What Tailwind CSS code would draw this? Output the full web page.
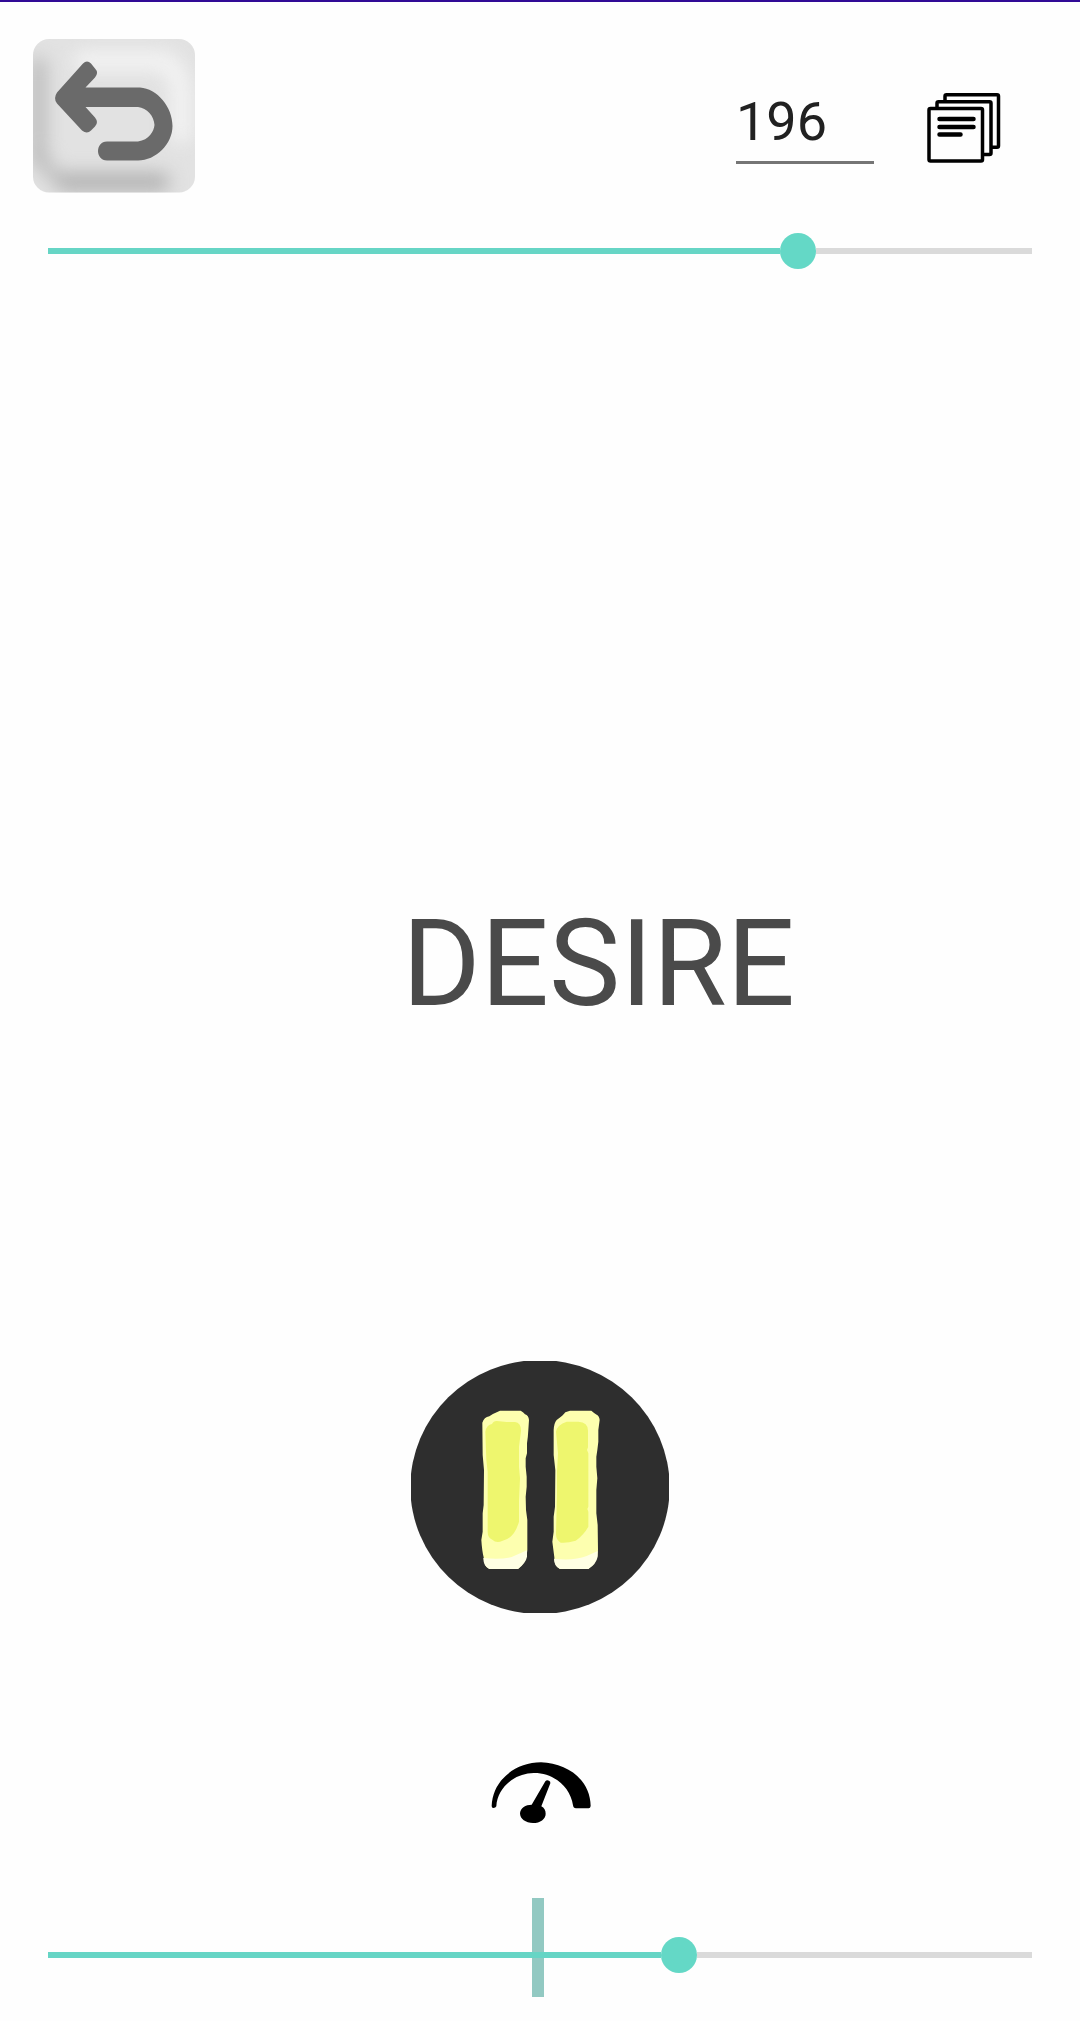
<!DOCTYPE html>
<html lang="en">
<head>
    <meta charset="UTF-8">
    <meta name="viewport" content="width=device-width, initial-scale=1.0">
    <title>Reader</title>
    <script src="https://cdn.jsdelivr.net/npm/@tailwindcss/browser@4"></script>
</head>
<body class="bg-[#fefefe] font-['Roboto',sans-serif]">
    <div class="flex flex-col w-[1080px] h-[2021px] overflow-hidden">
        <div class="h-0.5 shrink-0 bg-[#310a96]"></div>

        <!-- Header -->
        <header class="flex items-start h-[213px] shrink-0 pl-[33px] pt-[37px]">
            <button class="block w-[162px] h-[154px]" aria-label="Back">
                <svg class="block" width="162" height="154" viewBox="0 0 162 154">
                    <defs>
                        <clipPath id="key"><rect width="162" height="153.5" rx="16"/></clipPath>
                        <filter id="soft" filterUnits="userSpaceOnUse" x="-60" y="-60" width="280" height="280" color-interpolation-filters="sRGB"><feGaussianBlur stdDeviation="9"/></filter>
                    </defs>
                    <g clip-path="url(#key)">
                        <rect width="162" height="154" fill="#e2e2e2"/>
                        <g filter="url(#soft)" fill="none" stroke-linecap="round">
                            <path d="M50 22H128Q146 26 148 55V95" stroke="#f3f3f3" stroke-width="20"/>
                            <path d="M5 26V120" stroke="#b8b8b8" stroke-width="15"/>
                            <path d="M5 100Q8 132 32 144" stroke="#bababa" stroke-width="12"/>
                            <path d="M32 143H128" stroke="#b0b0b0" stroke-width="18"/>
                        </g>
                    </g>
                    <path d="M50 24.500Q54 20.500 58 24.500L62 29.500Q66 33.500 62 38.500L52.500 48.500H107C124 49.500 139.500 68 139.500 87C139.500 105 123 121.500 105 121.500H74C62 121.500 62 102.500 74 102.500H105C116 101 121 92 121.500 86C121 77 114 69 105 68H52.500L62 78.500Q66 83.500 62 87.500L58 91.500Q54 95.500 49 91.500L24 64.500Q20 59.500 24 53.500Z" fill="#6a6a6a"/>
                </svg>
            </button>
            <div class="w-[138px] h-[70px] mt-[55px] ml-[541px] border-b-3 border-[#757575] text-[54px] leading-[55px] text-[#212121]">196</div>
            <svg class="block mt-[52px] ml-[51px]" width="80" height="76" viewBox="925 91 80 76" fill="#fefefe" stroke="#000" stroke-width="3.5">
                <rect x="945" y="94.700" width="53.500" height="52.500" rx="1.500"/>
                <rect x="937" y="101.700" width="54" height="52.700" rx="1.500"/>
                <rect x="929" y="108.500" width="53.500" height="52.500" rx="1.500"/>
                <g stroke-width="4.500" stroke-linecap="round">
                    <path d="M939.500 119H973.500M939.500 127H973.500M939.500 134.500H960.500"/>
                </g>
            </svg>
        </header>

        <!-- Position slider -->
        <div class="flex items-center h-9 shrink-0 mt-[18px] mx-12">
            <div class="h-1.5 bg-[#66d5c5] w-[732px]"></div>
            <div class="size-9 rounded-full bg-[#64d8c6]"></div>
            <div class="h-1.5 bg-[#dadada] flex-1"></div>
        </div>

        <!-- Current word -->
        <main class="h-[1092px] shrink-0 pt-[635px] pl-[402px] text-[120px] leading-[120px] text-[#4a4a4a]">DESIRE</main>

        <button class="block self-center shrink-0 w-[258px] h-[252px]" aria-label="Pause">
            <svg class="block" width="258" height="252" viewBox="33 33 774 756">
                <ellipse cx="420" cy="411" rx="389" ry="381" fill="#2e2e2e"/>
                <g>
                    <path d="M300 182H362Q371 187 375 193Q386 197 387 210L385 240Q384 260 381 280V310L377 325V350L380 380V410L377 440L378 480L382 510V600Q382 633 354 657H268Q251 650 251 622Q246 602 244 570L248 545V490L251 465L252 360L248 315L247 218Q252 202 268 199Q280 190 300 182Z" fill="#fdffaf"/>
                    <path d="M290 213L320 216H345Q363 218 363 242L357 290V350L360 385L357 455V515Q343 565 308 572Q289 581 277 569Q263 563 263 545V365L259 330L256 245Q260 224 276 222Q280 213 290 213Z" fill="#eef66e"/>
                    <path d="M250 624Q300 630 335 621L381 601V620Q378 638 354 657H268Q250 648 250 624Z" fill="#ffffe4"/>
                </g>
                <g>
                    <path d="M510 182H574Q583 190 590 194Q598 198 599 210L595 240V275L592 300L589 320V350L592 385L589 420V490L593 525L594 600Q594 635 565 657H480Q463 649 463 622L457 575L461 545V500L465 470L466 360L461 315V240Q462 219 470 210Q490 196 496 187Z" fill="#fdffaf"/>
                    <path d="M500 215H535Q564 216 564 242V292L561 300L565 310V470L562 477L565 485V530Q551 555 527 572Q501 580 482 578Q468 570 468 552L471 430V365L474 310L468 245Q472 224 500 215Z" fill="#eef66e"/>
                    <path d="M462 626Q520 633 560 618L593 603V620Q589 642 565 657H480Q462 649 462 626Z" fill="#ffffe4"/>
                </g>
            </svg>
        </button>

        <!-- Speed gauge -->
        <svg class="block self-center shrink-0 mt-[145px]" width="108" height="72" viewBox="48 54 324 216">
            <path d="M65 198C68 119 138 67 213 67C291 69 361 119 362 198Q361 205 356 205H318Q310 205 309 196C301 140 250 98 191 99C133 100 82 143 79 199Q77 204 70 204Q65 204 65 198Z"/>
            <path d="M226 124Q230 119 237 122Q242 124 241 130L214 199Q227 206 227 221C227 237 211 249 189 249C167 249 150 237 150 220C151 204 167 194 185 194Z"/>
        </svg>

        <!-- Speed slider with its default mark -->
        <div class="relative flex items-center h-[115px] shrink-0 mt-[67px] px-12">
            <div class="absolute left-[532px] top-[1px] w-3 h-[99px] bg-[#92c9c2]"></div>
            <div class="relative h-1.5 bg-[#66d5c5] w-[613px]"></div>
            <div class="relative size-9 rounded-full bg-[#64d8c6]"></div>
            <div class="h-1.5 bg-[#dadada] flex-1"></div>
        </div>
    </div>
</body>
</html>
